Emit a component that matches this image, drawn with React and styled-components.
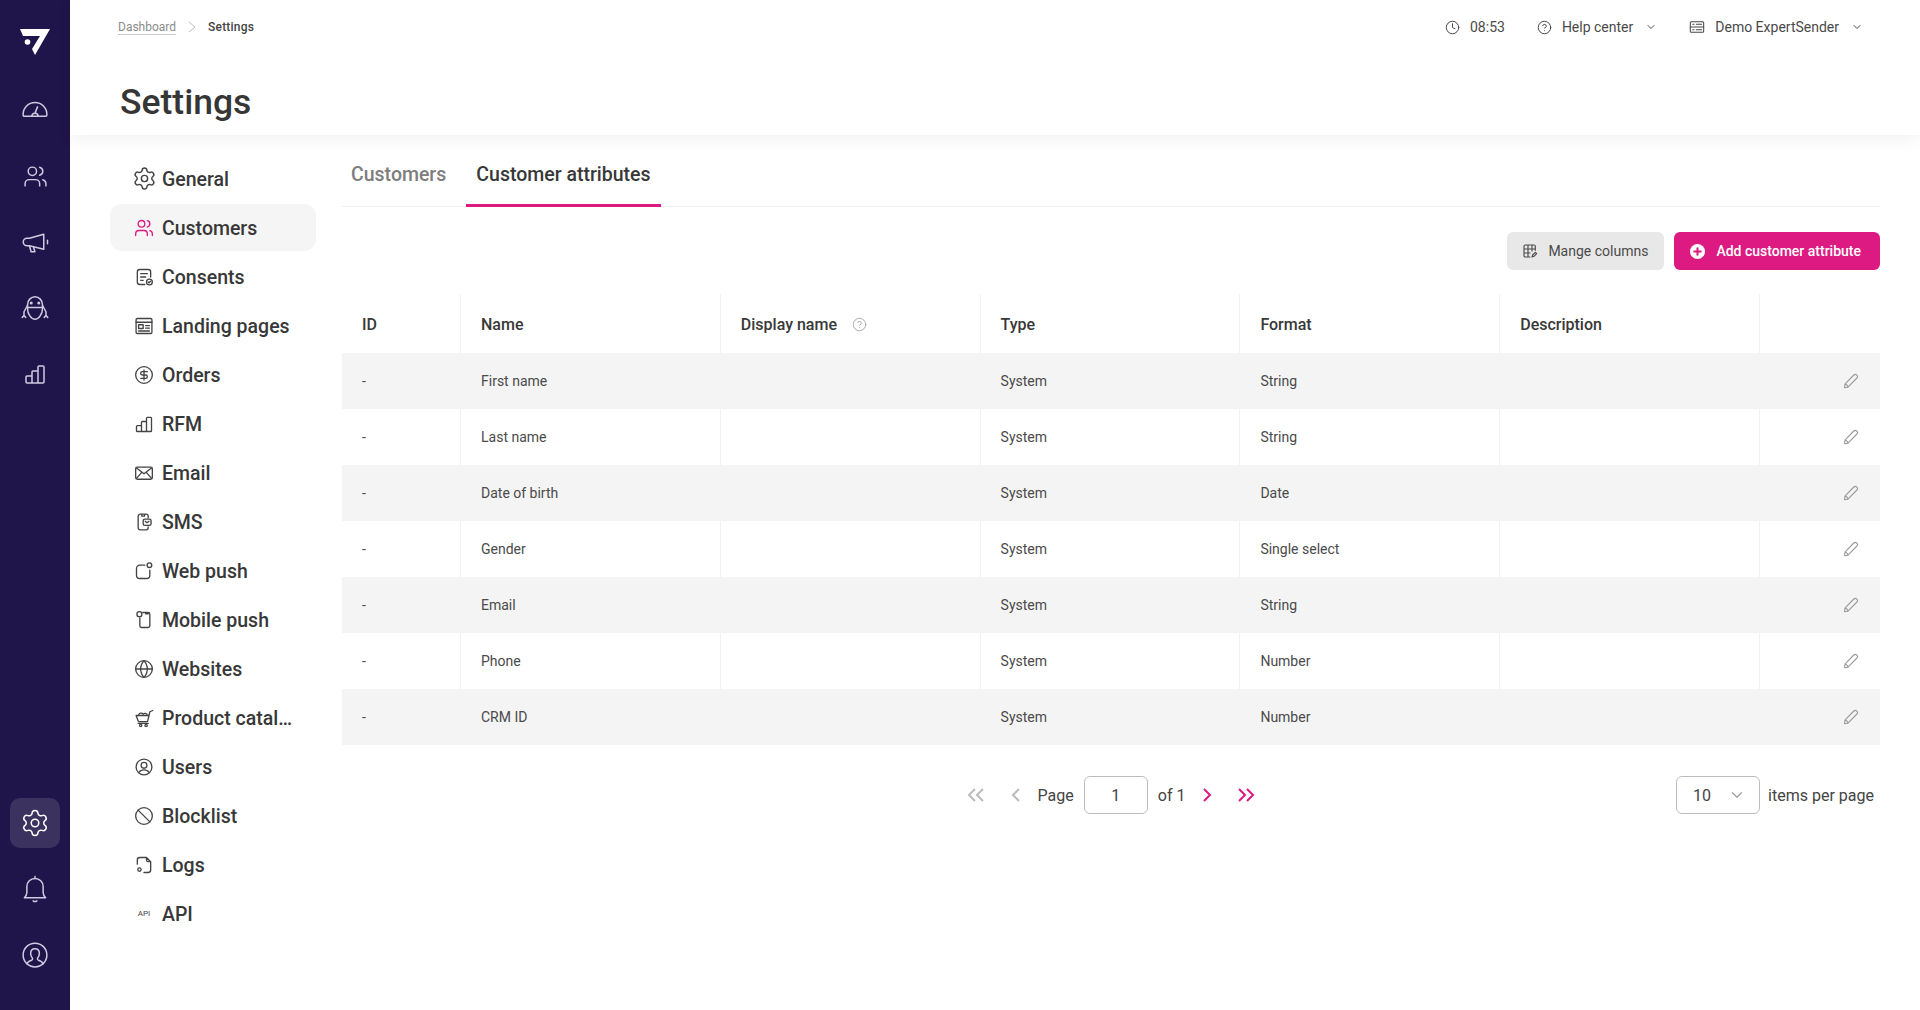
import React from 'react';
import styled, {createGlobalStyle} from 'styled-components';
import {Settings as GearIcon, Users as UsersIcon, CircleDollarSign, Globe, Ban, ChevronDown, Clock, CircleHelp} from 'lucide-react';

const INK = '#3c3c3c';
const PINK = '#dc1a82';
const NAVY = '#1f154a';

const GlobalStyle = createGlobalStyle`
  html, body {
    margin: 0;
    height: 100%;
    overflow: hidden;
    background: #fff;
    color: ${INK};
    font-family: Roboto, "Liberation Sans", sans-serif;
  }
  * {
    box-sizing: border-box;
  }
`;

const Page = styled.div`
  display: flex;
  height: 1010px;
`;

const Sidebar = styled.nav`
  flex: 0 0 70px;
  display: flex;
  flex-direction: column;
  align-items: center;
  background: ${NAVY};
  color: #cfcbe0;
  padding-top: 28px;
`;

const Logo = styled.div`
  height: 32px;
  margin-bottom: 25px;
`;

const NavGroup = styled.div`
  display: flex;
  flex-direction: column;
  gap: 16px;
`;

const BottomGroup = styled(NavGroup)`
  margin-top: auto;
  margin-bottom: 30px;
`;

const NavButton = styled.div`
  width: 50px;
  height: 50px;
  display: flex;
  align-items: center;
  justify-content: center;
  border-radius: 10px;
  background: ${({$active}) => ($active ? '#3b3260' : 'transparent')};
  color: ${({$active}) => ($active ? '#fff' : 'inherit')};
`;

const Main = styled.div`
  flex: 1;
  min-width: 0;
  display: flex;
  flex-direction: column;
`;

const Header = styled.header`
  height: 135px;
  padding: 0 48px;
  background: #fff;
  box-shadow: 0 4px 16px rgba(0, 0, 0, 0.06);
  position: relative;
`;

const TopBar = styled.div`
  height: 54px;
  display: flex;
  align-items: center;
  justify-content: space-between;
`;

const Breadcrumbs = styled.div`
  display: flex;
  align-items: center;
  font-size: 12px;
  gap: 12px;
`;

const CrumbLink = styled.a`
  color: #8b8b8b;
  border-bottom: 1px solid #c9c9c9;
  line-height: 14px;
`;

const CrumbCurrent = styled.span`
  font-weight: 500;
  color: #444;
  letter-spacing: 0.2px;
`;

const TopActions = styled.div`
  display: flex;
  align-items: center;
  font-size: 14px;
  color: #4a4a4a;
  padding-right: 9px;
`;

const TopItem = styled.div`
  display: flex;
  align-items: center;
  gap: 10px;
  margin-left: ${({$gap}) => $gap}px;
`;

const TopChevron = styled(ChevronDown)`
  margin-left: 2px;
`;

const Title = styled.h1`
  margin: 20px 0 0 2px;
  font-size: 35.5px;
  line-height: 56px;
  font-weight: 500;
  color: #363636;
`;

const Body = styled.div`
  flex: 1;
  min-width: 0;
  display: flex;
  padding: 20px 40px 0;
`;

const Menu = styled.ul`
  flex: 0 0 206px;
  width: 206px;
  min-width: 0;
  list-style: none;
  margin: 0;
  padding: 0;
  display: flex;
  flex-direction: column;
  gap: 2px;
`;

const MenuItem = styled.li`
  height: 47px;
  display: flex;
  align-items: center;
  border-radius: 12px;
  font-size: 19.5px;
  font-weight: 500;
  color: #383838;
  background: ${({$active}) => ($active ? '#f5f5f5' : 'transparent')};
`;

const MenuIcon = styled.span`
  flex: 0 0 52px;
  display: flex;
  align-items: center;
  justify-content: center;
  padding-left: 16px;
  color: ${({$active}) => ($active ? PINK : '#444')};
`;

const ApiMark = styled.span`
  font-size: 8px;
  font-weight: 400;
  color: #444;
`;

const MenuLabel = styled.span`
  flex: 1;
  min-width: 0;
  white-space: nowrap;
  overflow: hidden;
  text-overflow: ellipsis;
  padding: 2px 21px 0 0;
`;

const Content = styled.section`
  flex: 1;
  min-width: 0;
  margin-left: 26px;
`;

const TabBar = styled.div`
  display: flex;
  gap: 10px;
  border-bottom: 1px solid #f0f0f0;
  height: 52px;
`;

const Tab = styled.div`
  height: 52px;
  padding: 8px 10px 0 ${({$first}) => ($first ? 9 : 10)}px;
  font-size: 19.5px;
  line-height: 24px;
  font-weight: 500;
  color: ${({$active}) => ($active ? '#383838' : '#7d7d7d')};
  border-bottom: 3px solid ${({$active}) => ($active ? PINK : 'transparent')};
`;

const Actions = styled.div`
  display: flex;
  justify-content: flex-end;
  gap: 10px;
  margin-top: 25px;
`;

const Button = styled.button`
  height: 38px;
  display: flex;
  align-items: center;
  gap: ${({$primary}) => ($primary ? 11 : 10)}px;
  padding: 0 ${({$primary}) => ($primary ? 19 : 16)}px 0 ${({$primary}) => ($primary ? 16 : 15)}px;
  border: 0;
  border-radius: 6px;
  font-family: inherit;
  font-size: 14px;
  font-weight: ${({$primary}) => ($primary ? 500 : 400)};
  color: ${({$primary}) => ($primary ? '#fff' : '#4a4a4a')};
  background: ${({$primary}) => ($primary ? PINK : '#e8e8e8')};
`;

const Table = styled.div`
  margin-top: 24px;
`;

const Row = styled.div`
  display: grid;
  grid-template-columns: 119px repeat(5, 1fr) 120px;
  height: ${({$head}) => ($head ? 59 : 56)}px;
  background: ${({$stripe}) => ($stripe ? '#f4f4f4' : '#fff')};
`;

const Cell = styled.div`
  display: flex;
  align-items: center;
  gap: 15px;
  padding: ${({$head}) => ($head ? '2px' : '0')} 20px 0;
  font-size: ${({$head}) => ($head ? 16 : 14)}px;
  font-weight: ${({$head}) => ($head ? 500 : 400)};
  color: ${({$head}) => ($head ? '#383838' : '#4a4a4a')};
  border-right: 1px solid ${({$stripe, $last}) => ($stripe || $last ? 'transparent' : '#f1f1f1')};
  justify-content: ${({$end}) => ($end ? 'flex-end' : 'flex-start')};
`;

const EditIcon = styled.svg`
  width: 16px;
  height: 16px;
  color: #9a9a9a;
`;

const Pager = styled.div`
  display: grid;
  grid-template-columns: 1fr auto 1fr;
  align-items: center;
  margin-top: 31px;
  padding-right: 6px;
  font-size: 16px;
  color: #444;
`;

const PagerCenter = styled.div`
  grid-column: 2;
  display: flex;
  align-items: center;
  gap: 10px;
  margin-left: 6px;
`;

const ArrowGroup = styled.div`
  display: flex;
  gap: ${({$gap}) => $gap}px;
`;

const ArrowButton = styled.span`
  width: 24px;
  height: 24px;
  display: flex;
  align-items: center;
  justify-content: center;
  color: ${({$on}) => ($on ? PINK : '#bcbcbc')};
`;

const PageInput = styled.div`
  width: 64px;
  height: 38px;
  display: flex;
  align-items: center;
  justify-content: center;
  border: 1px solid #bdbdbd;
  border-radius: 6px;
`;

const PerPage = styled.div`
  justify-self: end;
  display: flex;
  align-items: center;
  gap: 8px;
`;

const PerPageSelect = styled.div`
  width: 84px;
  height: 38px;
  display: flex;
  align-items: center;
  justify-content: space-between;
  padding: 0 13px 0 16px;
  border: 1px solid #bdbdbd;
  border-radius: 6px;
`;

const Svg = ({size = 24, stroke = 1.5, children}) => (
  <svg
    width={size}
    height={size}
    viewBox="0 0 24 24"
    fill="none"
    stroke="currentColor"
    strokeWidth={stroke}
    strokeLinecap="round"
    strokeLinejoin="round"
  >
    {children}
  </svg>
);

const NAV_SIZE = 30;
const NAV_STROKE = 1.2;
const MENU_SIZE = 20;
const MENU_STROKE = 1.6;

const Gauge = () => (
  <Svg size={NAV_SIZE} stroke={NAV_STROKE}>
    <path d="M2.5 15.5a9.5 9.5 0 0 1 19 0v.5a1 1 0 0 1-1 1h-17a1 1 0 0 1-1-1z" />
    <path d="M9.5 17a2.500 2.500 0 0 1 2.500-2.500 2.500 2.500 0 0 1 2.500 2.500M12 14.500l2-5" />
  </Svg>
);

const Megaphone = () => (
  <Svg size={NAV_SIZE} stroke={NAV_STROKE}>
    <path d="M19 5.800 7.500 9H5.600a3 3 0 0 0 0 6h1.900L19 17.800z" />
    <path d="M7.500 15l1.400 4.800h3l-1-3.600M22 10.600v2.800" />
  </Svg>
);

const Robot = () => (
  <Svg size={NAV_SIZE} stroke={NAV_STROKE}>
    <path d="M6 9.500a6 6.500 0 0 1 12 0v3c0 4-3 8.500-6 8.500s-6-4.500-6-8.500z" />
    <path d="M6 11.500h12M6 10l-2.800 5v3M1.800 19.500l1.400-1.500 1.400 1.500M18 10l2.800 5v3M19.400 19.500l1.400-1.500 1.400 1.500" />
    <circle cx="9" cy="8" r="0.6" />
    <circle cx="15" cy="8" r="0.6" />
  </Svg>
);

const Bars = ({size = 24, stroke = 1.5}) => (
  <Svg size={size} stroke={stroke}>
    <path d="M3 20v-5a1 1 0 0 1 1-1h5v7H4a1 1 0 0 1-1-1zM9 21V10a1 1 0 0 1 1-1h5v12zM15 21V5a1 1 0 0 1 1-1h4a1 1 0 0 1 1 1v15a1 1 0 0 1-1 1z" />
  </Svg>
);

const Bell = () => (
  <Svg size={NAV_SIZE} stroke={NAV_STROKE}>
    <path d="M12 2v1.500M12 3.500A6.500 6.500 0 0 0 5.500 10v4.500c0 1.800-.8 3.300-2 4.500h17c-1.200-1.200-2-2.700-2-4.500V10A6.500 6.500 0 0 0 12 3.500zM10.500 21.500c.8.600 2.200.600 3 0" />
  </Svg>
);

const Account = () => (
  <Svg size={NAV_SIZE} stroke={NAV_STROKE}>
    <circle cx="12" cy="12" r="9.500" />
    <path d="M5.500 19c.6-1.600 2.200-2.300 3.700-2.800.8-.3 1-.9.800-1.600-.9-1-1.500-2.300-1.500-3.800 0-2.200 1.300-3.800 3.500-3.800s3.500 1.600 3.500 3.800c0 1.500-.6 2.800-1.500 3.800-.2.700 0 1.300.8 1.600 1.500.5 3.100 1.200 3.700 2.800" />
  </Svg>
);

const Consents = () => (
  <Svg size={MENU_SIZE} stroke={MENU_STROKE}>
    <path d="M20 12V6a3 3 0 0 0-3-3H7a3 3 0 0 0-3 3v12a3 3 0 0 0 3 3h6M8 8h8M8 12h6M8 16h3" />
    <circle cx="18.500" cy="18" r="3.500" />
    <path d="m17 18 1 1 2-2" />
  </Svg>
);

const Landing = () => (
  <Svg size={MENU_SIZE} stroke={MENU_STROKE}>
    <rect x="2.500" y="3" width="19" height="18" rx="1.500" />
    <path d="M2.500 7.500h19M14 11.500h4.500M14 14.500h4.500M5.500 18h13" />
    <rect x="5.500" y="10.500" width="5.500" height="4.500" />
  </Svg>
);

const Envelope = () => (
  <Svg size={MENU_SIZE} stroke={MENU_STROKE}>
    <rect x="2" y="5" width="20" height="14.500" rx="2" />
    <path d="m3 6 9 7 9-7M3 18.500l6.500-7.500M21 18.500 14.500 11" />
  </Svg>
);

const Sms = () => (
  <Svg size={MENU_SIZE} stroke={MENU_STROKE}>
    <path d="M17 7V5a2.500 2.500 0 0 0-2.500-2.500h-7A2.500 2.500 0 0 0 5 5v14a2.500 2.500 0 0 0 2.500 2.500h7A2.500 2.500 0 0 0 17 19v-1M9 2.500 9.500 5h3l.5-2.500" />
    <rect x="11" y="8.500" width="9.500" height="7.500" rx="2" />
    <path d="m13.500 11 2.200 1.800L18 11" />
  </Svg>
);

const WebPush = () => (
  <Svg size={MENU_SIZE} stroke={MENU_STROKE}>
    <path d="M13 5H7a4 4 0 0 0-4 4v8a4 4 0 0 0 4 4h8a4 4 0 0 0 4-4v-6" />
    <circle cx="18.500" cy="5" r="2.800" />
  </Svg>
);

const MobilePush = () => (
  <Svg size={MENU_SIZE} stroke={MENU_STROKE}>
    <path d="M10.500 3H17a2 2 0 0 1 2 2v14a2 2 0 0 1-2 2H9a2 2 0 0 1-2-2V9.500M14 3v1.500h3" />
    <circle cx="6.500" cy="5" r="3" />
  </Svg>
);

const Cart = () => (
  <Svg size={MENU_SIZE} stroke={MENU_STROKE}>
    <path d="M2.500 9H18l-1.500 6.500a1 1 0 0 1-1 .8H6a1 1 0 0 1-1-.8zM18 9l1-4.500L22.500 3M5 18.500h12" />
    <path d="M5.500 9a3 3 0 0 1 5.500-1.500A2.800 2.800 0 0 1 16 9" />
    <circle cx="8" cy="21" r="1.400" />
    <circle cx="14.500" cy="21" r="1.400" />
  </Svg>
);

const Person = () => (
  <Svg size={MENU_SIZE} stroke={MENU_STROKE}>
    <circle cx="12" cy="12" r="9.500" />
    <circle cx="12" cy="10" r="3.500" />
    <path d="M6 18.500c1.200-2 3.500-3 6-3s4.800 1 6 3" />
  </Svg>
);

const Logs = () => (
  <Svg size={MENU_SIZE} stroke={MENU_STROKE}>
    <path d="M4 11V6a3 3 0 0 1 3-3h8l5 5v10a3 3 0 0 1-3 3h-5M15 3v3a2 2 0 0 0 2 2h3" />
    <circle cx="6.500" cy="17.500" r="2" />
  </Svg>
);

const Demo = () => (
  <Svg size={16} stroke={1.600}>
    <rect x="2" y="4" width="20" height="16" rx="1.500" />
    <path d="M2 12h20M5.500 8h2M11 8h8M5.500 16h2M11 16h8" />
  </Svg>
);

const ColumnsGlyph = () => (
  <Svg size={16} stroke={1.700}>
    <path d="M20 11V5a2 2 0 0 0-2-2H5a2 2 0 0 0-2 2v14a2 2 0 0 0 2 2h7M3 9h17M3 15h9M9 3v18M15 3v9" />
    <path d="m15 21 1-3 4-4 2 2-4 4z" />
  </Svg>
);

const PlusBadge = () => (
  <svg width="15" height="15" viewBox="0 0 16 16">
    <circle cx="8" cy="8" r="8" fill="#fff" />
    <path d="M8 4.500v7M4.500 8h7" stroke={PINK} strokeWidth="2.200" strokeLinecap="round" />
  </svg>
);

const Pencil = () => (
  <EditIcon viewBox="0 0 16 16" fill="none" stroke="currentColor" strokeWidth="1.100" strokeLinejoin="round">
    <path d="M1.500 14.700 2 11.200 10.800 2a2 2 0 0 1 2.900 0l.2.200a2 2 0 0 1 0 2.800L5 14.200z" />
    <path d="M2 11.200c1 .1 2.700 1.600 3 3" />
  </EditIcon>
);

const Twin = ({flip}) => (
  <svg width="18" height="14" viewBox="0 0 18 14" fill="none" stroke="currentColor" strokeWidth="2">
    <path d={flip ? 'M2 1l6 6-6 6M10 1l6 6-6 6' : 'M8 1 2 7l6 6M16 1l-6 6 6 6'} />
  </svg>
);

const Single = ({flip}) => (
  <svg width="10" height="14" viewBox="0 0 10 14" fill="none" stroke="currentColor" strokeWidth="2">
    <path d={flip ? 'M2 1l6 6-6 6' : 'M8 1 2 7l6 6'} />
  </svg>
);

const MENU = [
  {label: 'General', icon: <GearIcon size={25} strokeWidth={1.400} />},
  {label: 'Customers', icon: <UsersIcon size={MENU_SIZE} strokeWidth={MENU_STROKE} />, active: true},
  {label: 'Consents', icon: <Consents />},
  {label: 'Landing pages', icon: <Landing />},
  {label: 'Orders', icon: <CircleDollarSign size={MENU_SIZE} strokeWidth={MENU_STROKE} />},
  {label: 'RFM', icon: <Bars size={MENU_SIZE} stroke={MENU_STROKE} />},
  {label: 'Email', icon: <Envelope />},
  {label: 'SMS', icon: <Sms />},
  {label: 'Web push', icon: <WebPush />},
  {label: 'Mobile push', icon: <MobilePush />},
  {label: 'Websites', icon: <Globe size={MENU_SIZE} strokeWidth={MENU_STROKE} />},
  {label: 'Product catalogs', icon: <Cart />},
  {label: 'Users', icon: <Person />},
  {label: 'Blocklist', icon: <Ban size={MENU_SIZE} strokeWidth={MENU_STROKE} />},
  {label: 'Logs', icon: <Logs />},
  {label: 'API', icon: <ApiMark>API</ApiMark>},
];

const COLUMNS = ['ID', 'Name', 'Display name', 'Type', 'Format', 'Description', ''];

const ATTRIBUTES = [
  ['First name', 'String'],
  ['Last name', 'String'],
  ['Date of birth', 'Date'],
  ['Gender', 'Single select'],
  ['Email', 'String'],
  ['Phone', 'Number'],
  ['CRM ID', 'Number'],
];

const App = () => (
  <Page>
    <GlobalStyle />
    <Sidebar>
      <Logo>
        <svg width="30" height="28" viewBox="0 0 30 28" fill="#fff">
          <path d="M0 1h30L15 27l-3-6 8-13H3z" />
          <circle cx="7.500" cy="14" r="2.800" />
        </svg>
      </Logo>
      <NavGroup>
        <NavButton><Gauge /></NavButton>
        <NavButton><UsersIcon size={25} strokeWidth={1.400} /></NavButton>
        <NavButton><Megaphone /></NavButton>
        <NavButton><Robot /></NavButton>
        <NavButton><Bars /></NavButton>
      </NavGroup>
      <BottomGroup>
        <NavButton $active><GearIcon size={NAV_SIZE} strokeWidth={NAV_STROKE} /></NavButton>
        <NavButton><Bell /></NavButton>
        <NavButton><Account /></NavButton>
      </BottomGroup>
    </Sidebar>
    <Main>
      <Header>
        <TopBar>
          <Breadcrumbs>
            <CrumbLink>Dashboard</CrumbLink>
            <svg width="8" height="12" viewBox="0 0 8 12" fill="none" stroke="#bdbdbd" strokeWidth="1">
              <path d="m1 1 6 5-6 5" />
            </svg>
            <CrumbCurrent>Settings</CrumbCurrent>
          </Breadcrumbs>
          <TopActions>
            <TopItem $gap={0}>
              <Clock size={15} strokeWidth={1.600} />
              <span>08:53</span>
            </TopItem>
            <TopItem $gap={32}>
              <CircleHelp size={15} strokeWidth={1.600} />
              <span>Help center</span>
              <TopChevron size={12} strokeWidth={2} />
            </TopItem>
            <TopItem $gap={32}>
              <Demo />
              <span>Demo ExpertSender</span>
              <TopChevron size={12} strokeWidth={2} />
            </TopItem>
          </TopActions>
        </TopBar>
        <Title>Settings</Title>
      </Header>
      <Body>
        <Menu>
          {MENU.map(({label, icon, active}) => (
            <MenuItem key={label} $active={active}>
              <MenuIcon $active={active}>{icon}</MenuIcon>
              <MenuLabel>{label}</MenuLabel>
            </MenuItem>
          ))}
        </Menu>
        <Content>
          <TabBar>
            <Tab $first>Customers</Tab>
            <Tab $active>Customer attributes</Tab>
          </TabBar>
          <Actions>
            <Button>
              <ColumnsGlyph />
              Mange columns
            </Button>
            <Button $primary>
              <PlusBadge />
              Add customer attribute
            </Button>
          </Actions>
          <Table>
            <Row $head>
              {COLUMNS.map((column, i) => (
                <Cell key={i} $head $last={i === COLUMNS.length - 1}>
                  {column}
                  {column === 'Display name' && (
                    <CircleHelp size={15} strokeWidth={1.300} color="#9a9a9a" />
                  )}
                </Cell>
              ))}
            </Row>
            {ATTRIBUTES.map(([name, format], i) => {
              const stripe = i % 2 === 0;
              return (
                <Row key={name} $stripe={stripe}>
                  <Cell $stripe={stripe}>-</Cell>
                  <Cell $stripe={stripe}>{name}</Cell>
                  <Cell $stripe={stripe} />
                  <Cell $stripe={stripe}>System</Cell>
                  <Cell $stripe={stripe}>{format}</Cell>
                  <Cell $stripe={stripe} />
                  <Cell $stripe={stripe} $last $end>
                    <Pencil />
                  </Cell>
                </Row>
              );
            })}
          </Table>
          <Pager>
            <PagerCenter>
              <ArrowGroup $gap={16}>
                <ArrowButton><Twin /></ArrowButton>
                <ArrowButton><Single /></ArrowButton>
              </ArrowGroup>
              <span>Page</span>
              <PageInput>1</PageInput>
              <span>of 1</span>
              <ArrowGroup $gap={15}>
                <ArrowButton $on><Single flip /></ArrowButton>
                <ArrowButton $on><Twin flip /></ArrowButton>
              </ArrowGroup>
            </PagerCenter>
            <PerPage>
              <PerPageSelect>
                10
                <ChevronDown size={18} strokeWidth={1.500} color="#9a9a9a" />
              </PerPageSelect>
              <span>items per page</span>
            </PerPage>
          </Pager>
        </Content>
      </Body>
    </Main>
  </Page>
);

export default App;
